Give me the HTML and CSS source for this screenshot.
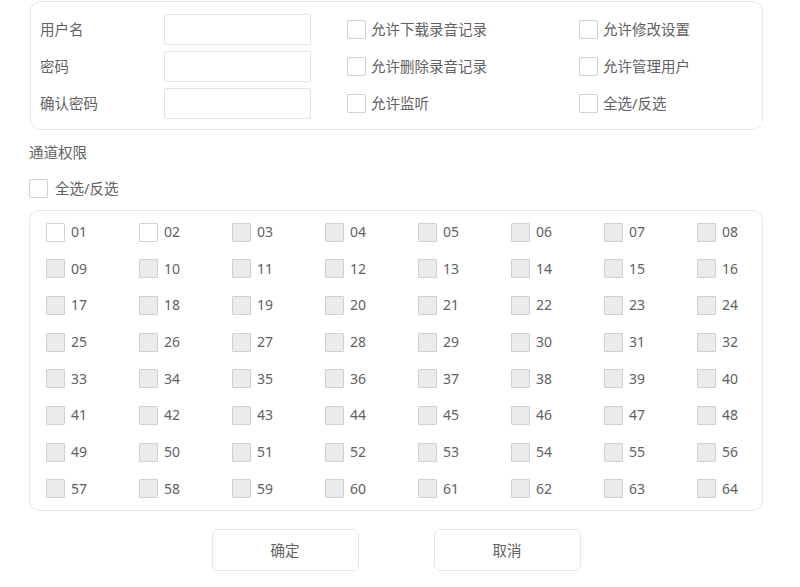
FILE: index.html
```html
<!DOCTYPE html>
<html lang="zh-CN">
<head>
    <meta charset="UTF-8">
    <title>用户设置</title>
    <link rel="stylesheet" href="styles.css">
</head>
<body>
    <div class="page">
        <div class="panel user-panel">
            <div class="user-grid">
                <span class="field-label">用户名</span>
                <input type="text" class="text-input">
                <label class="check"><input type="checkbox"><span>允许下载录音记录</span></label>
                <label class="check"><input type="checkbox"><span>允许修改设置</span></label>

                <span class="field-label">密码</span>
                <input type="password" class="text-input">
                <label class="check"><input type="checkbox"><span>允许删除录音记录</span></label>
                <label class="check"><input type="checkbox"><span>允许管理用户</span></label>

                <span class="field-label">确认密码</span>
                <input type="password" class="text-input">
                <label class="check"><input type="checkbox"><span>允许监听</span></label>
                <label class="check"><input type="checkbox"><span>全选/反选</span></label>
            </div>
        </div>

        <div class="section-title">通道权限</div>
        <label class="check select-all"><input type="checkbox"><span>全选/反选</span></label>

        <div class="panel channel-panel">
            <div class="channel-grid" id="channelGrid"></div>
        </div>

        <div class="actions">
            <button class="btn">确定</button>
            <button class="btn">取消</button>
        </div>
    </div>

    <script>
        const grid = document.getElementById('channelGrid');
        for (let i = 1; i <= 64; i++) {
            const num = String(i).padStart(2, '0');
            const item = document.createElement('label');
            item.className = 'check channel';
            // only the first two channels are available
            const disabled = i > 2 ? 'disabled' : '';
            item.innerHTML = `<input type="checkbox" ${disabled}><span>${num}</span>`;
            grid.appendChild(item);
        }
    </script>
</body>
</html>
```

FILE: styles.css
```css
body {
    margin: 0;
    font-family: "Noto Sans", "Noto Sans CJK SC", sans-serif;
    font-size: 14.5px;
    color: #616161;
    background: #fff;
}
.page {
    width: 734px;
    padding: 1px 0 0 29px;
}
.panel {
    border: 1px solid #e8e8e8;
    border-radius: 10px;
    box-sizing: border-box;
}
.user-panel {
    margin-left: 1px;
    width: 733px;
    padding: 12px 9px 11px 9px;
}
.user-grid {
    display: grid;
    grid-template-columns: 124px 147px 268px auto;
    grid-auto-rows: 30px;
    row-gap: 7px;
    align-items: center;
}
.user-grid .check {
    margin-left: 36px;
}
.user-grid .check:nth-child(4n) {
    margin-left: 0;
}
.field-label {
    line-height: 20px;
}
.text-input {
    width: 147px;
    height: 31px;
    box-sizing: border-box;
    border: 1px solid #e2e2e2;
    border-radius: 2px;
    padding: 0 6px;
    margin: 0;
    outline: none;
}
.check {
    display: flex;
    align-items: center;
    gap: 5px;
    line-height: 20px;
}
.check input {
    appearance: none;
    -webkit-appearance: none;
    width: 19px;
    height: 19px;
    margin: 0;
    border: 1px solid #d2d2d2;
    border-radius: 1px;
    background: #fff;
    box-sizing: border-box;
}
.check input:disabled {
    background: #ebebeb;
    border-color: #d0d0d0;
}
.section-title {
    margin-top: 12px;
    line-height: 20px;
}
.select-all {
    margin-top: 16px;
    gap: 7px;
}
.channel-panel {
    margin-top: 12px;
    width: 734px;
    padding: 11px 10px 11px 16px;
}
.channel-grid {
    display: grid;
    grid-template-columns: repeat(8, 93px);
    grid-auto-rows: 20px;
    row-gap: 16.7px;
}
.channel {
    gap: 6px;
    font-size: 14px;
}
.actions {
    display: flex;
    justify-content: center;
    gap: 75px;
    margin-top: 18px;
    width: 734px;
}
.btn {
    width: 147px;
    height: 42px;
    background: #fff;
    border: 1px solid #e6e6e6;
    border-radius: 6px;
    font-family: inherit;
    font-size: 14.5px;
    color: #616161;
    cursor: pointer;
}
```
